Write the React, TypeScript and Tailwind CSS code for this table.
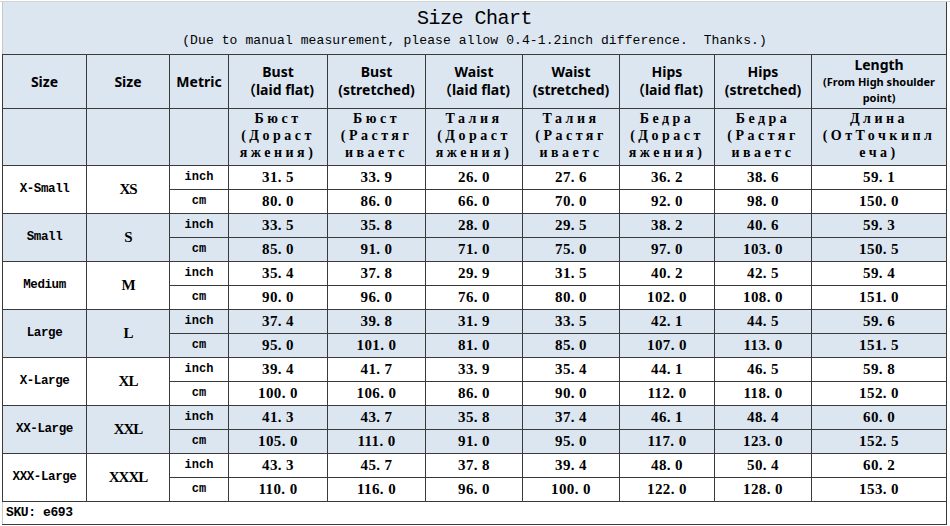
import React from 'react';

const mono = "font-['Liberation_Mono',monospace]";
const serif = "font-['Liberation_Serif',serif]";
const sans = "font-['Noto_Sans','Noto_Sans_CJK_SC',sans-serif]";

const colWidths = [84, 83, 59, 99, 98, 97, 97, 95, 97, 135];

const headers: { title: string; sub: string }[] = [
    { title: 'Bust', sub: '（laid flat)' },
    { title: 'Bust', sub: '(stretched)' },
    { title: 'Waist', sub: '（laid flat)' },
    { title: 'Waist', sub: '(stretched)' },
    { title: 'Hips', sub: '（laid flat)' },
    { title: 'Hips', sub: '(stretched)' },
];

const russian: string[][] = [
    ['Бюст', '(Дораст', 'яжения)'],
    ['Бюст', '(Растяг', 'иваетс'],
    ['Талия', '(Дораст', 'яжения)'],
    ['Талия', '(Растяг', 'иваетс'],
    ['Бедра', '(Дораст', 'яжения)'],
    ['Бедра', '(Растяг', 'иваетс'],
    ['Длина', '(ОтТочкипл', 'еча)'],
];

const sizes = [
    { name: 'X-Small', code: 'XS', inch: ['31. 5', '33. 9', '26. 0', '27. 6', '36. 2', '38. 6', '59. 1'], cm: ['80. 0', '86. 0', '66. 0', '70. 0', '92. 0', '98. 0', '150. 0'] },
    { name: 'Small', code: 'S', inch: ['33. 5', '35. 8', '28. 0', '29. 5', '38. 2', '40. 6', '59. 3'], cm: ['85. 0', '91. 0', '71. 0', '75. 0', '97. 0', '103. 0', '150. 5'] },
    { name: 'Medium', code: 'M', inch: ['35. 4', '37. 8', '29. 9', '31. 5', '40. 2', '42. 5', '59. 4'], cm: ['90. 0', '96. 0', '76. 0', '80. 0', '102. 0', '108. 0', '151. 0'] },
    { name: 'Large', code: 'L', inch: ['37. 4', '39. 8', '31. 9', '33. 5', '42. 1', '44. 5', '59. 6'], cm: ['95. 0', '101. 0', '81. 0', '85. 0', '107. 0', '113. 0', '151. 5'] },
    { name: 'X-Large', code: 'XL', inch: ['39. 4', '41. 7', '33. 9', '35. 4', '44. 1', '46. 5', '59. 8'], cm: ['100. 0', '106. 0', '86. 0', '90. 0', '112. 0', '118. 0', '152. 0'] },
    { name: 'XX-Large', code: 'XXL', inch: ['41. 3', '43. 7', '35. 8', '37. 4', '46. 1', '48. 4', '60. 0'], cm: ['105. 0', '111. 0', '91. 0', '95. 0', '117. 0', '123. 0', '152. 5'] },
    { name: 'XXX-Large', code: 'XXXL', inch: ['43. 3', '45. 7', '37. 8', '39. 4', '48. 0', '50. 4', '60. 2'], cm: ['110. 0', '116. 0', '96. 0', '100. 0', '122. 0', '128. 0', '153. 0'] },
];

const cell = 'border border-[#3a3a3a] p-0 text-center align-middle text-black';
const num = `${cell} ${serif} font-bold text-[15px] tracking-[0.4px] whitespace-pre`;

export default function App() {
    return (
        <div className="w-[950px] h-[526px] bg-white overflow-hidden">
            <div className="h-[2px] border-b border-[#d4d4d4]" />
            <div className="pl-[2px]">
                <table className="table-fixed border-collapse w-[944px]">
                    <colgroup>
                        {colWidths.map((w, i) => (
                            <col key={i} style={{ width: w }} />
                        ))}
                    </colgroup>
                    <tbody>
                        {/* Title */}
                        <tr className="h-[52px] bg-[#dce6f1]">
                            <td colSpan={10} className={`${cell} border-t-0 border-l-[#c8c8c8]`}>
                                <div className={`${mono} text-[20px] leading-[24px] tracking-[-0.5px] pt-[2px]`}>Size Chart</div>
                                <div className={`${mono} text-[13px] leading-[20px] tracking-[0.1px] whitespace-pre`}>
                                    (Due to manual measurement, please allow 0.4-1.2inch difference.  Thanks.)
                                </div>
                            </td>
                        </tr>

                        {/* English header */}
                        <tr className="h-[54px] bg-[#dce6f1]">
                            <td className={`${cell} ${sans} font-bold text-[14px]`}>Size</td>
                            <td className={`${cell} ${sans} font-bold text-[14px]`}>Size</td>
                            <td className={`${cell} ${sans} font-bold text-[14px]`}>Metric</td>
                            {headers.map((h, i) => (
                                <td key={i} className={`${cell} ${sans} font-bold text-[14px] leading-[18px]`}>
                                    <div>{h.title}</div>
                                    <div>{h.sub}</div>
                                </td>
                            ))}
                            <td className={`${cell} ${sans} font-bold`}>
                                <div className="text-[14px] leading-[18px]">Length</div>
                                <div className="text-[11px] leading-[16px] px-1">(From High shoulder point)</div>
                            </td>
                        </tr>

                        {/* Russian header */}
                        <tr className="h-[57px] bg-[#dce6f1]">
                            <td className={cell} />
                            <td className={cell} />
                            <td className={cell} />
                            {russian.map((lines, i) => (
                                <td key={i} className={`${cell} align-top`}>
                                    <div className={`${serif} h-[55px] overflow-hidden text-[14px] leading-[17px] tracking-[3.5px] pt-[1px] font-semibold`}>
                                        {lines.map((l, j) => (
                                            <div key={j} className="whitespace-nowrap">{l}</div>
                                        ))}
                                    </div>
                                </td>
                            ))}
                        </tr>

                        {/* Data */}
                        {sizes.map((s, i) => {
                            const bg = i % 2 === 1 ? 'bg-[#dce6f1]' : 'bg-white';
                            return (
                                <React.Fragment key={s.code}>
                                    <tr className={`h-[24px] ${bg}`}>
                                        <td rowSpan={2} className={`${cell} ${mono} font-bold text-[12.5px] tracking-[-0.4px]`}>{s.name}</td>
                                        <td rowSpan={2} className={`${cell} ${serif} font-bold text-[15px] tracking-[-1px]`}>{s.code}</td>
                                        <td className={`${cell} ${mono} font-bold text-[12px]`}>inch</td>
                                        {s.inch.map((v, j) => (
                                            <td key={j} className={num}>{v}</td>
                                        ))}
                                    </tr>
                                    <tr className={`h-[24px] ${bg}`}>
                                        <td className={`${cell} ${mono} font-bold text-[12px]`}>cm</td>
                                        {s.cm.map((v, j) => (
                                            <td key={j} className={num}>{v}</td>
                                        ))}
                                    </tr>
                                </React.Fragment>
                            );
                        })}

                        {/* SKU */}
                        <tr className="h-[23px] bg-white">
                            <td colSpan={10} className={`${cell} text-left ${mono} font-bold text-[13px] tracking-[-0.4px] pl-[3px] border-l-[#c8c8c8]`}>
                                SKU: e693
                            </td>
                        </tr>
                    </tbody>
                </table>
            </div>
        </div>
    );
}
